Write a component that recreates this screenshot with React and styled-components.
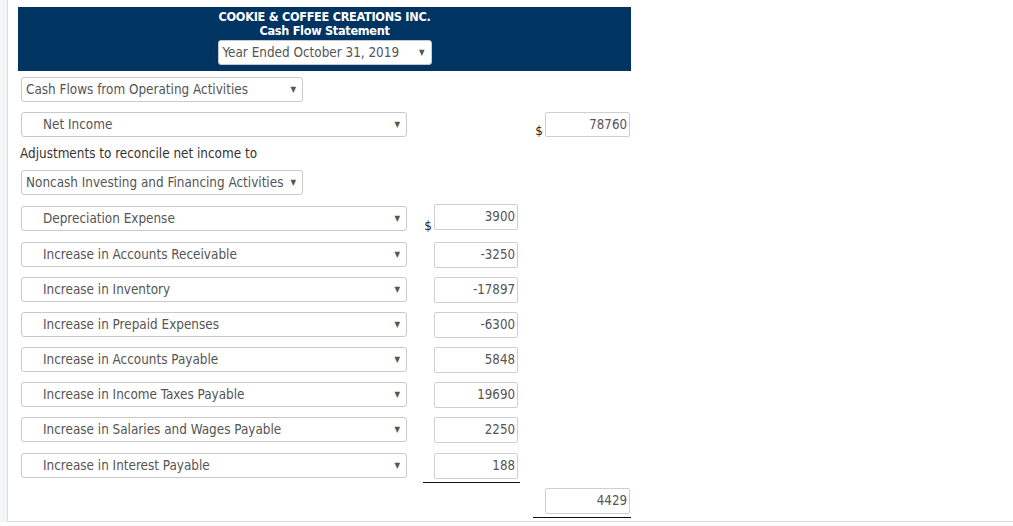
import React from "react";
import styled, { createGlobalStyle } from "styled-components";

const Global = createGlobalStyle`
  html, body { margin: 0; padding: 0; background: #ffffff; }
  body { font-family: "DejaVu Sans Condensed", "DejaVu Sans", sans-serif; }
  * { box-sizing: border-box; }
`;

const Page = styled.div`
  display: flex;
  background: #f4f7fa;
  padding-left: 7px;
  height: 522px;
`;

const Frame = styled.div`
  flex: 1;
  background: #ffffff;
  border-left: 1px solid #d9dee4;
  border-bottom: 1px solid #d5dae0;
  height: 522px;
  padding: 7px 0 0 10px;
`;

const Sheet = styled.div`
  width: 613px;
  display: flex;
  flex-direction: column;
`;

const Header = styled.div`
  background: #003462;
  height: 64px;
  display: flex;
  flex-direction: column;
  align-items: center;
  padding-top: 3px;
`;

const Title = styled.div`
  color: #ffffff;
  font-family: "DejaVu Sans Condensed", "DejaVu Sans", sans-serif;
  font-weight: bold;
  font-size: 12.6px;
  line-height: 14px;
  letter-spacing: -0.3px;
`;

const Select = styled.div`
  width: ${(p) => p.$w}px;
  height: 25px;
  flex: none;
  background: #ffffff;
  border: 1px solid #c9c9c9;
  border-radius: 3px;
  display: flex;
  align-items: center;
  justify-content: space-between;
  padding: 0 6px 0 ${(p) => (p.$indent ? 21 : 4)}px;
  color: #555555;
  font-size: 13.4px;
  margin-top: ${(p) => p.$mt || 0}px;
  margin-left: ${(p) => (p.$ml === undefined ? 3 : p.$ml)}px;
  white-space: nowrap;
`;

const Arrow = styled.span`
  font-size: 8px;
  color: #555555;
  margin-left: 4px;
`;

const Row = styled.div`
  display: flex;
  align-items: stretch;
  height: 25px;
  margin-top: ${(p) => p.$mt}px;
  padding-left: 3px;
`;

const Spacer = styled.div`
  width: ${(p) => p.$w}px;
  flex: none;
`;

const Cell = styled.div`
  width: ${(p) => p.$w}px;
  flex: none;
  display: flex;
  justify-content: flex-end;
  align-items: flex-end;
`;

const Dollar = styled.span`
  font-family: "DejaVu Sans", sans-serif;
  font-size: 12px;
  line-height: 12px;
  color: #222;
  margin-right: 2px;
  margin-bottom: ${(p) => p.$mb || 0}px;
`;

const Amount = styled.div`
  width: ${(p) => p.$w || 84}px;
  height: ${(p) => p.$h || 26}px;
  align-self: ${(p) => p.$self || "flex-start"};
  margin-top: ${(p) => p.$mt || 0}px;
  border: 1px solid #cfcfcf;
  border-radius: 2px;
  background: #fff;
  color: #555555;
  font-size: 13.2px;
  display: flex;
  justify-content: flex-end;
  align-items: flex-start;
  padding: 4px 2px 0 0;
`;

const Note = styled.div`
  color: #333333;
  font-size: 13.4px;
  line-height: 18px;
  margin-top: 8px;
  padding-left: 2px;
`;

const RuleRow = styled.div`
  display: flex;
  margin-top: ${(p) => p.$mt}px;
  padding-left: ${(p) => p.$left}px;
`;

const Rule = styled.div`
  width: ${(p) => p.$w}px;
  height: 1px;
  background: #111;
`;

const adjustments = [
  ["Depreciation Expense", "3900", true],
  ["Increase in Accounts Receivable", "-3250"],
  ["Increase in Inventory", "-17897"],
  ["Increase in Prepaid Expenses", "-6300"],
  ["Increase in Accounts Payable", "5848"],
  ["Increase in Income Taxes Payable", "19690"],
  ["Increase in Salaries and Wages Payable", "2250"],
  ["Increase in Interest Payable", "188"],
];

export default function App() {
  return (
    <>
      <Global />
      <Page>
        <Frame>
          <Sheet>
            <Header>
              <Title>COOKIE &amp; COFFEE CREATIONS INC.</Title>
              <Title>Cash Flow Statement</Title>
              <Select $w={214} $ml={0} $mt={2}>
                Year Ended October 31, 2019 <Arrow>▼</Arrow>
              </Select>
            </Header>

            <Select $w={282} $mt={6}>
              Cash Flows from Operating Activities <Arrow>▼</Arrow>
            </Select>

            <Row $mt={10}>
              <Select $w={386} $ml={0} $indent>
                Net Income <Arrow>▼</Arrow>
              </Select>
              <Spacer $w={111} />
              <Cell $w={112}>
                <Dollar>$</Dollar>
                <Amount $w={85} $h={25}>78760</Amount>
              </Cell>
            </Row>

            <Note>Adjustments to reconcile net income to</Note>

            <Select $w={282} $mt={7}>
              Noncash Investing and Financing Activities <Arrow>▼</Arrow>
            </Select>

            {adjustments.map(([label, value, first], i) => (
              <Row key={label} $mt={i <= 1 || i === 7 ? 11 : 10}>
                <Select $w={386} $ml={0} $indent>
                  {label} <Arrow>▼</Arrow>
                </Select>
                <Cell $w={111}>
                  {first && <Dollar $mb={-1}>$</Dollar>}
                  <Amount $self={first ? "flex-start" : "stretch"} $mt={first ? -2 : 0}>
                    {value}
                  </Amount>
                </Cell>
              </Row>
            ))}

            <RuleRow $mt={4} $left={405}>
              <Rule $w={97} />
            </RuleRow>

            <Row $mt={5}>
              <Spacer $w={386} />
              <Spacer $w={111} />
              <Cell $w={112}>
                <Amount $w={85} $h={26}>4429</Amount>
              </Cell>
            </Row>

            <RuleRow $mt={4} $left={515}>
              <Rule $w={98} />
            </RuleRow>
          </Sheet>
        </Frame>
      </Page>
    </>
  );
}
